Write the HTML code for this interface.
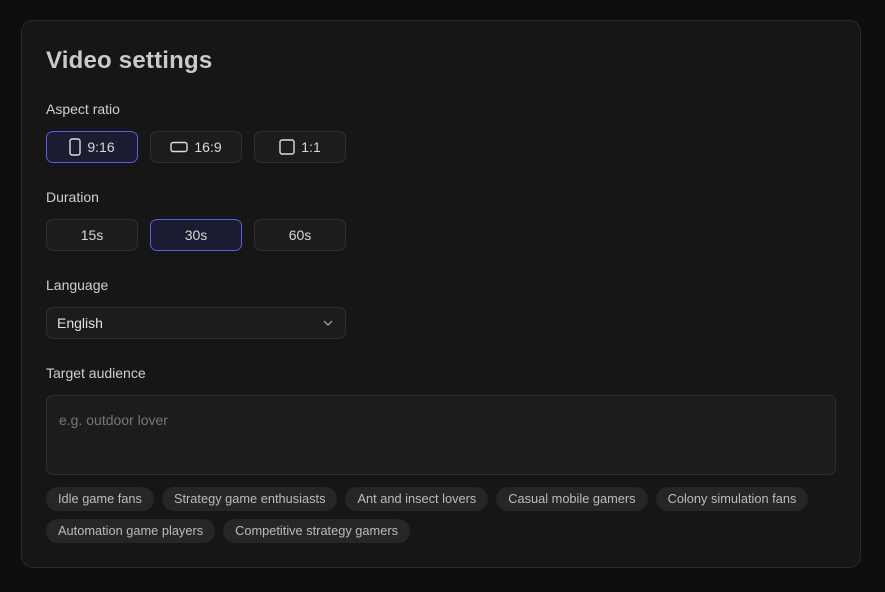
<!DOCTYPE html>
<html><head><style>
*{box-sizing:border-box;margin:0;padding:0}
body{width:885px;height:592px;background:#0e0e0e;font-family:"Liberation Sans",sans-serif;color:#d4d4d4;position:relative;overflow:hidden}
.card{position:absolute;left:21px;top:20px;width:840px;height:548px;background:#161616;border:1px solid #2a2a2a;border-radius:12px}
.abs{position:absolute}
h1{position:absolute;left:24px;top:26px;font-size:24px;font-weight:bold;color:#cacaca;letter-spacing:0.2px}
.lbl{position:absolute;left:24px;font-size:14px;color:#d0d0d0}
.btn{position:absolute;width:92px;height:32px;background:#1c1c1c;border:1px solid #2e2e2e;border-radius:7px;display:flex;align-items:center;justify-content:center;font-size:14px;color:#d8d8d8;gap:6px}
.sel{background:#1b1b31;border-color:#5b5de6}
.select{position:absolute;left:24px;top:286px;width:300px;height:32px;background:#1c1c1c;border:1px solid #2e2e2e;border-radius:7px;font-size:14px;color:#e0e0e0;padding:7px 10px}
.ta{position:absolute;left:24px;top:374px;width:790px;height:80px;background:#1c1c1c;border:1px solid #2e2e2e;border-radius:7px;font-size:14px;color:#777;padding:16px 12px}
.chips{position:absolute;left:24px;top:466px;width:790px;display:flex;flex-wrap:wrap;gap:8px 8px}
.chip{height:24px;background:#262626;border-radius:12px;padding:0 12px;font-size:12.8px;color:#bcbcbc;line-height:24px}
</style></head><body>
<div class="card">
<h1>Video settings</h1>
<div class="lbl" style="top:80px">Aspect ratio</div>
<div class="btn sel" style="left:24px;top:110px"><svg width="12" height="18"><rect x="1" y="1" width="10" height="16" rx="2" fill="none" stroke="#ddd" stroke-width="1.4"/></svg>9:16</div>
<div class="btn" style="left:128px;top:110px"><svg width="18" height="12"><rect x="1" y="1.5" width="16" height="9" rx="2" fill="none" stroke="#ddd" stroke-width="1.4"/></svg>16:9</div>
<div class="btn" style="left:232px;top:110px"><svg width="16" height="16"><rect x="1" y="1" width="14" height="14" rx="2" fill="none" stroke="#ddd" stroke-width="1.4"/></svg>1:1</div>
<div class="lbl" style="top:168px">Duration</div>
<div class="btn" style="left:24px;top:198px">15s</div>
<div class="btn sel" style="left:128px;top:198px">30s</div>
<div class="btn" style="left:232px;top:198px">60s</div>
<div class="lbl" style="top:256px">Language</div>
<div class="select">English<svg class="abs" style="right:12px;top:12px" width="10" height="6"><path d="M1 1L5 5L9 1" fill="none" stroke="#aaa" stroke-width="1.2"/></svg></div>
<div class="lbl" style="top:344px">Target audience</div>
<div class="ta">e.g. outdoor lover</div>
<div class="chips">
<div class="chip">Idle game fans</div><div class="chip">Strategy game enthusiasts</div><div class="chip">Ant and insect lovers</div><div class="chip">Casual mobile gamers</div><div class="chip">Colony simulation fans</div>
<div class="chip">Automation game players</div><div class="chip">Competitive strategy gamers</div>
</div>
</div>
</body></html>
